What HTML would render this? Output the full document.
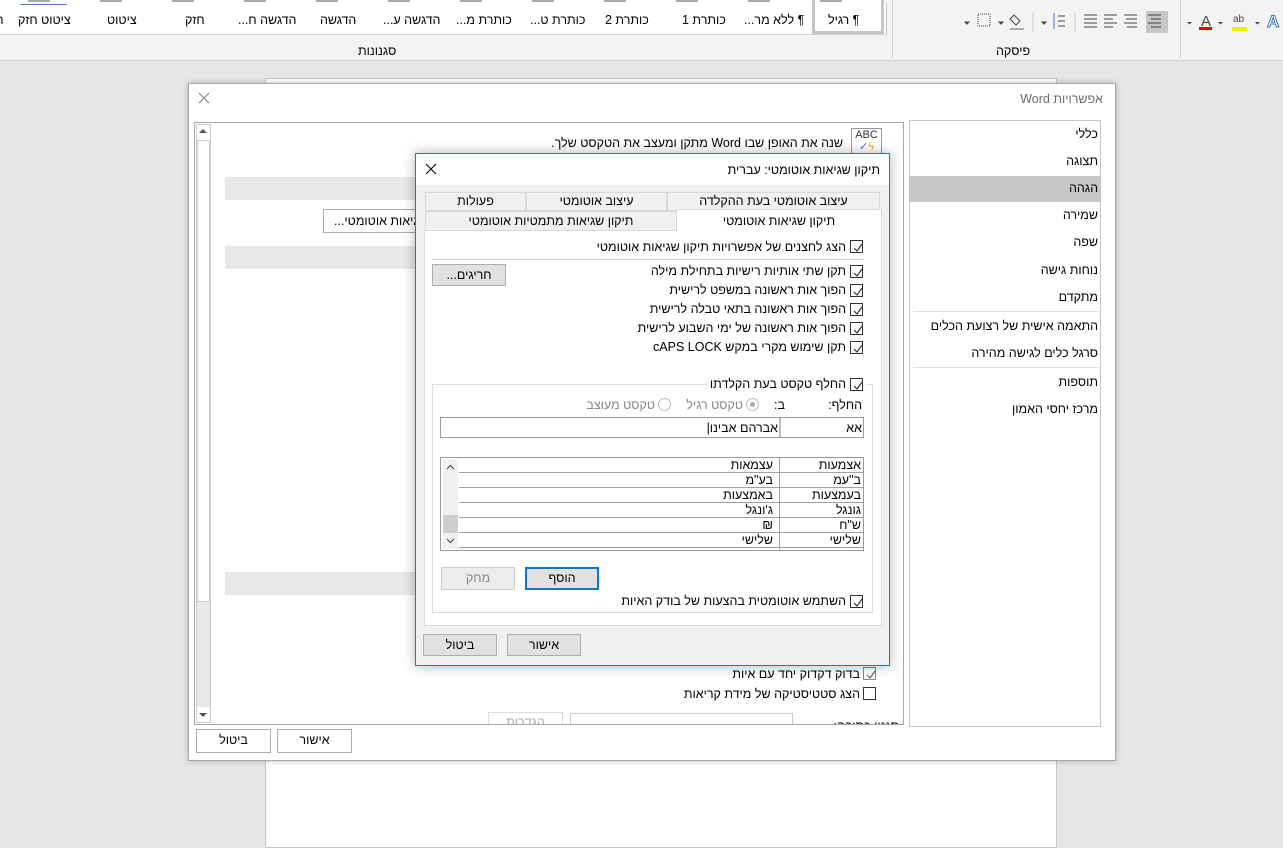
<!DOCTYPE html>
<html><head><meta charset="utf-8">
<style>
*{box-sizing:border-box;margin:0;padding:0}
body{width:1283px;height:838px;position:relative;overflow:hidden;background:#e6e6e6;font-family:"Liberation Sans","DejaVu Sans",sans-serif;font-size:12.5px;color:#000}
.a{position:absolute}
.t{position:absolute;white-space:nowrap;direction:rtl;line-height:16px}
.cb{position:absolute;width:13px;height:13px;border:1px solid #333;background:#fff}
.cb svg{position:absolute;left:1px;top:1px}
.btn{position:absolute;border:1px solid #adadad;background:#e1e1e1;text-align:center;line-height:20px;direction:rtl}
.row{position:absolute;height:15px;border-bottom:1px solid #a0a0a0;line-height:14px;direction:rtl}
.tab{position:absolute;border:1px solid #d9d9d9;background:#f0f0f0;text-align:center;direction:rtl}
</style></head><body>
<!-- ribbon -->
<div class="a" style="left:0;top:0;width:1283px;height:61px;background:#f3f3f3;border-bottom:1px solid #d5d5d5"></div>
<div class="a" style="left:0;top:0;width:887px;height:35px;background:#fff;border-bottom:1px solid #d0d0d0;border-right:1px solid #c6c6c6"></div>
<div class="a" style="left:0;top:0;width:887px;height:2px;background:repeating-linear-gradient(90deg,#fff 0 28px,#aaa 28px 50px,#fff 50px 72px)"></div>
<div class="a" style="left:20px;top:4px;width:47px;height:1px;background:#4a7fc1"></div>
<div class="a" style="left:812px;top:0;width:72px;height:34px;border:3px solid #c6c6c6;border-top:none"></div>
<div class="t" style="left:-12px;top:12px">הפ</div>
<div class="t" style="left:18px;top:12px">ציטוט חזק</div>
<div class="t" style="left:107px;top:12px">ציטוט</div>
<div class="t" style="left:185px;top:12px">חזק</div>
<div class="t" style="left:238px;top:12px">הדגשה ח...</div>
<div class="t" style="left:320px;top:12px">הדגשה</div>
<div class="t" style="left:383px;top:12px">הדגשה ע...</div>
<div class="t" style="left:456px;top:12px">כותרת מ...</div>
<div class="t" style="left:530px;top:12px">כותרת ט...</div>
<div class="t" style="left:605px;top:12px">כותרת 2</div>
<div class="t" style="left:682px;top:12px">כותרת 1</div>
<div class="t" style="left:744px;top:12px">¶ ללא מר...</div>
<div class="t" style="left:828px;top:12px">¶ רגיל</div>
<div class="t" style="left:358px;top:43px">סגנונות</div>
<div class="t" style="left:996px;top:43px">פיסקה</div>
<div class="a" style="left:892px;top:0;width:1px;height:58px;background:#d0d0d0"></div>
<div class="a" style="left:1180px;top:0;width:1px;height:58px;background:#d0d0d0"></div>
<div class="a" style="left:1146px;top:11px;width:22px;height:22px;background:#c6c6c6"></div>
<svg class="a" style="left:958px;top:10px" width="230" height="24">
<g stroke="#444" stroke-width="1">
<path d="M7 12h4l-2 2z" fill="#444"/><rect x="20" y="4" width="12" height="12" fill="none" stroke-dasharray="1 1"/>
<path d="M41 12h4l-2 2z" fill="#444"/><path d="M52 19h14" stroke="#666"/><path d="M56 5l6 6-4 4-6-6z" fill="none"/>
<path d="M75 2v20" stroke="#ccc"/><path d="M84 12h4l-2 2z" fill="#444"/>
<path d="M96 3v16" stroke="#3d7bc7"/><path d="M100 6h7M100 11h7M100 16h7"/>
<path d="M117 2v20" stroke="#ccc"/>
<path d="M126 5h13M126 9h13M126 13h13M126 17h13"/>
<path d="M146 5h13M146 9h9M146 13h13M146 17h9"/>
<path d="M166 5h13M168 9h11M166 13h13M169 17h10"/>
<path d="M190 5h13M193 9h10M190 13h13M193 17h10"/></g>
</svg>
<svg class="a" style="left:1185px;top:8px" width="98" height="26">
<path d="M2 14h5l-2.5 2.5z" fill="#444"/>
<text x="16" y="18" font-size="15" font-family="Liberation Sans" fill="#444">A</text><rect x="14" y="19" width="13" height="3" fill="#e00"/>
<path d="M33 14h5l-2.5 2.5z" fill="#444"/>
<text x="48" y="14" font-size="10" font-family="Liberation Sans" fill="#444">ab</text><rect x="47" y="19" width="15" height="4" fill="#ee0"/>
<path d="M70 14h5l-2.5 2.5z" fill="#444"/>
<text x="82" y="19" font-size="17" font-family="Liberation Sans" font-weight="bold" fill="#fff" stroke="#3b73c0">A</text>
</svg>
<!-- document page -->
<div class="a" style="left:265px;top:78px;width:792px;height:770px;background:#fff;border:1px solid #c6c6c6"></div>

<!-- Word options -->
<div class="a" style="left:188px;top:83px;width:928px;height:678px;background:#fff;border:1px solid #a8a8a8;box-shadow:0 0 6px rgba(0,0,0,.25)"></div>
<div class="t" style="right:180px;top:91px;color:#6d6d6d">אפשרויות Word</div>
<svg class="a" style="left:198px;top:92px" width="12" height="12"><path d="M1 1l10 10M11 1L1 11" stroke="#888" stroke-width="1.2"/></svg>
<div class="a" style="left:909px;top:120px;width:192px;height:607px;border:1px solid #c6c6c6"></div>
<div class="a" style="left:910px;top:176px;width:190px;height:26px;background:#c6c6c6"></div>
<div class="t" style="right:185px;top:126px">כללי</div>
<div class="t" style="right:185px;top:153px">תצוגה</div>
<div class="t" style="right:185px;top:180px">הגהה</div>
<div class="t" style="right:185px;top:207px">שמירה</div>
<div class="t" style="right:185px;top:234px">שפה</div>
<div class="t" style="right:185px;top:262px">נוחות גישה</div>
<div class="t" style="right:185px;top:289px">מתקדם</div>
<div class="a" style="left:913px;top:311px;width:186px;height:1px;background:#ddd"></div>
<div class="t" style="right:185px;top:318px">התאמה אישית של רצועת הכלים</div>
<div class="t" style="right:185px;top:345px">סרגל כלים לגישה מהירה</div>
<div class="a" style="left:913px;top:367px;width:186px;height:1px;background:#ddd"></div>
<div class="t" style="right:185px;top:374px">תוספות</div>
<div class="t" style="right:185px;top:401px">מרכז יחסי האמון</div>

<div class="a" style="left:194px;top:122px;width:710px;height:603px;border:1px solid #a8a8a8"></div>
<div class="a" style="left:196px;top:124px;width:15px;height:599px;background:#fff;border:1px solid #ccc"></div>
<div class="a" style="left:197px;top:140px;width:13px;height:462px;border:1px solid #ccc;background:#fff"></div>
<div class="a" style="left:197px;top:602px;width:13px;height:105px;background:#e8e8e8"></div>
<svg class="a" style="left:199px;top:128px" width="8" height="6"><path d="M0 5h8L4 1z" fill="#555"/></svg>
<svg class="a" style="left:199px;top:712px" width="8" height="6"><path d="M0 1h8L4 5z" fill="#555"/></svg>
<div class="a" style="left:851px;top:128px;width:31px;height:28px;border:1px solid #999;background:#fff;font-size:11px;line-height:12px;text-align:center;color:#333">ABC<br><span style="color:#3d7bc7;font-weight:bold">✓</span><span style="color:#e8b400">ϟ</span></div>
<div class="t" style="right:440px;top:135px">שנה את האופן שבו Word מתקן ומעצב את הטקסט שלך.</div>
<div class="a" style="left:225px;top:177px;width:200px;height:23px;background:#e8e8e8"></div>
<div class="a" style="left:225px;top:246px;width:200px;height:23px;background:#e8e8e8"></div>
<div class="a" style="left:225px;top:572px;width:200px;height:23px;background:#e8e8e8"></div>
<div class="a" style="left:323px;top:209px;width:100px;height:24px;border:1px solid #adadad;background:#fff;overflow:hidden"><div class="t" style="left:10px;top:3px">שגיאות אוטומטי...</div></div>
<div class="cb" style="left:863px;top:667px;border-color:#888"><svg width="11" height="11"><path d="M2 6l3 3 5-7" stroke="#666" fill="none" stroke-width="1.2"/></svg></div>
<div class="t" style="right:423px;top:666px">בדוק דקדוק יחד עם איות</div>
<div class="cb" style="left:863px;top:687px"></div>
<div class="t" style="right:423px;top:686px">הצג סטטיסטיקה של מידת קריאות</div>
<div class="a" style="left:195px;top:712px;width:708px;height:12px;overflow:hidden">
<div class="a" style="left:293px;top:0;width:75px;height:20px;border:1px solid #ddd;color:#aaa;text-align:center;line-height:18px">הגדרות</div>
<div class="a" style="left:375px;top:1px;width:223px;height:20px;border:1px solid #ccc"></div>
<div class="t" style="right:4px;top:6px">סגנון כתיבה:</div></div>
<div class="a" style="left:194px;top:724px;width:710px;height:1px;background:#a8a8a8"></div>
<div class="btn" style="left:196px;top:729px;width:75px;height:24px;background:#fff">ביטול</div>
<div class="btn" style="left:277px;top:729px;width:75px;height:24px;background:#fff">אישור</div>

<!-- AutoCorrect dialog -->
<div class="a" style="left:415px;top:153px;width:475px;height:513px;background:#f0f0f0;border:1px solid #1979ca;box-shadow:0 0 12px rgba(0,0,0,.3)"></div>
<div class="a" style="left:416px;top:154px;width:473px;height:31px;background:#fff"></div>
<div class="t" style="right:403px;top:162px">תיקון שגיאות אוטומטי: עברית</div>
<svg class="a" style="left:425px;top:163px" width="12" height="12"><path d="M1 1l10 10M11 1L1 11" stroke="#111" stroke-width="1.2"/></svg>
<!-- tabs -->
<div class="tab" style="left:425px;top:192px;width:101px;height:19px;line-height:17px">פעולות</div>
<div class="tab" style="left:526px;top:192px;width:141px;height:19px;line-height:17px">עיצוב אוטומטי</div>
<div class="tab" style="left:667px;top:192px;width:213px;height:19px;line-height:17px">עיצוב אוטומטי בעת ההקלדה</div>
<div class="tab" style="left:425px;top:211px;width:252px;height:20px;line-height:18px">תיקון שגיאות מתמטיות אוטומטי</div>
<div class="a" style="left:424px;top:230px;width:458px;height:396px;background:#fff;border:1px solid #d9d9d9"></div>
<div class="a" style="left:676px;top:209px;width:206px;height:23px;background:#fff;border:1px solid #d9d9d9;border-bottom:none;text-align:center;line-height:22px;direction:rtl">תיקון שגיאות אוטומטי</div>
<!-- checkboxes -->
<div class="cb" style="left:850px;top:240px"><svg width="11" height="11"><path d="M2 6l3 3 5-7" stroke="#333" fill="none" stroke-width="1.2"/></svg></div>
<div class="t" style="right:437px;top:239px">הצג לחצנים של אפשרויות תיקון שגיאות אוטומטי</div>
<div class="a" style="left:432px;top:259px;width:432px;height:1px;background:#ccc"></div>
<div class="cb" style="left:850px;top:265px"><svg width="11" height="11"><path d="M2 6l3 3 5-7" stroke="#333" fill="none" stroke-width="1.2"/></svg></div>
<div class="t" style="right:437px;top:263px">תקן שתי אותיות רישיות בתחילת מילה</div>
<div class="cb" style="left:850px;top:284px"><svg width="11" height="11"><path d="M2 6l3 3 5-7" stroke="#333" fill="none" stroke-width="1.2"/></svg></div>
<div class="t" style="right:437px;top:282px">הפוך אות ראשונה במשפט לרישית</div>
<div class="cb" style="left:850px;top:303px"><svg width="11" height="11"><path d="M2 6l3 3 5-7" stroke="#333" fill="none" stroke-width="1.2"/></svg></div>
<div class="t" style="right:437px;top:301px">הפוך אות ראשונה בתאי טבלה לרישית</div>
<div class="cb" style="left:850px;top:322px"><svg width="11" height="11"><path d="M2 6l3 3 5-7" stroke="#333" fill="none" stroke-width="1.2"/></svg></div>
<div class="t" style="right:437px;top:320px">הפוך אות ראשונה של ימי השבוע לרישית</div>
<div class="cb" style="left:850px;top:341px"><svg width="11" height="11"><path d="M2 6l3 3 5-7" stroke="#333" fill="none" stroke-width="1.2"/></svg></div>
<div class="t" style="right:437px;top:339px">תקן שימוש מקרי במקש cAPS LOCK</div>
<div class="btn" style="left:432px;top:264px;width:74px;height:22px">חריגים...</div>
<!-- group -->
<div class="a" style="left:432px;top:384px;width:441px;height:229px;border:1px solid #dcdcdc"></div>
<div class="a" style="left:707px;top:378px;width:160px;height:14px;background:#fff"></div>
<div class="cb" style="left:850px;top:378px"><svg width="11" height="11"><path d="M2 6l3 3 5-7" stroke="#333" fill="none" stroke-width="1.2"/></svg></div>
<div class="t" style="right:437px;top:376px">החלף טקסט בעת הקלדתו</div>
<div class="t" style="right:421px;top:397px">החלף:</div>
<div class="t" style="right:498px;top:397px">ב:</div>
<div class="a" style="left:746px;top:398px;width:13px;height:13px;border:1px solid #bbb;border-radius:50%"><div class="a" style="left:3px;top:3px;width:5px;height:5px;border-radius:50%;background:#aaa"></div></div>
<div class="t" style="right:540px;top:397px;color:#888">טקסט רגיל</div>
<div class="a" style="left:658px;top:398px;width:13px;height:13px;border:1px solid #bbb;border-radius:50%"></div>
<div class="t" style="right:628px;top:397px;color:#888">טקסט מעוצב</div>
<div class="a" style="left:440px;top:417px;width:424px;height:21px;border:1px solid #9a9a9a;background:#fff"></div>
<div class="a" style="left:779px;top:418px;width:2px;height:19px;background:#bbb"></div>
<div class="t" style="right:421px;top:420px">אא</div>
<div class="t" style="right:505px;top:420px">אברהם אבינו|</div>
<!-- list -->
<div class="a" style="left:440px;top:457px;width:424px;height:94px;border:1px solid #9a9a9a;background:#fff;overflow:hidden">
<div class="a" style="left:2px;top:1px;width:15px;height:90px;background:#f0f0f0"></div>
<div class="a" style="left:2px;top:57px;width:15px;height:18px;background:#cdcdcd"></div>
<svg class="a" style="left:5px;top:6px" width="9" height="6"><path d="M1 5l3.5-3.5L8 5" stroke="#444" fill="none"/></svg>
<svg class="a" style="left:5px;top:80px" width="9" height="6"><path d="M1 1l3.5 3.5L8 1" stroke="#444" fill="none"/></svg>
<div class="a" style="left:338px;top:0;width:1px;height:94px;background:#a0a0a0"></div>
<div class="row" style="left:18px;top:0;width:404px"><span class="a" style="right:2px">אצמעות</span><span class="a" style="right:90px">עצמאות</span></div>
<div class="row" style="left:18px;top:15px;width:404px"><span class="a" style="right:2px">ב"עמ</span><span class="a" style="right:90px">בע"מ</span></div>
<div class="row" style="left:18px;top:30px;width:404px"><span class="a" style="right:2px">בעמצעות</span><span class="a" style="right:90px">באמצעות</span></div>
<div class="row" style="left:18px;top:45px;width:404px"><span class="a" style="right:2px">גונגל</span><span class="a" style="right:90px">ג'ונגל</span></div>
<div class="row" style="left:18px;top:60px;width:404px"><span class="a" style="right:2px">ש"ח</span><span class="a" style="right:90px">₪</span></div>
<div class="row" style="left:18px;top:75px;width:404px"><span class="a" style="right:2px">שלישי</span><span class="a" style="right:90px">שלישי</span></div>
</div>
<div class="btn" style="left:441px;top:567px;width:74px;height:23px;color:#888;border-color:#ccc;background:#ececec">מחק</div>
<div class="btn" style="left:525px;top:567px;width:74px;height:23px;border:2px solid #0a78d7;line-height:19px">הוסף</div>
<div class="cb" style="left:850px;top:595px"><svg width="11" height="11"><path d="M2 6l3 3 5-7" stroke="#333" fill="none" stroke-width="1.2"/></svg></div>
<div class="t" style="right:437px;top:593px">השתמש אוטומטית בהצעות של בודק האיות</div>
<div class="btn" style="left:423px;top:634px;width:74px;height:22px">ביטול</div>
<div class="btn" style="left:507px;top:634px;width:74px;height:22px">אישור</div>
</body></html>
